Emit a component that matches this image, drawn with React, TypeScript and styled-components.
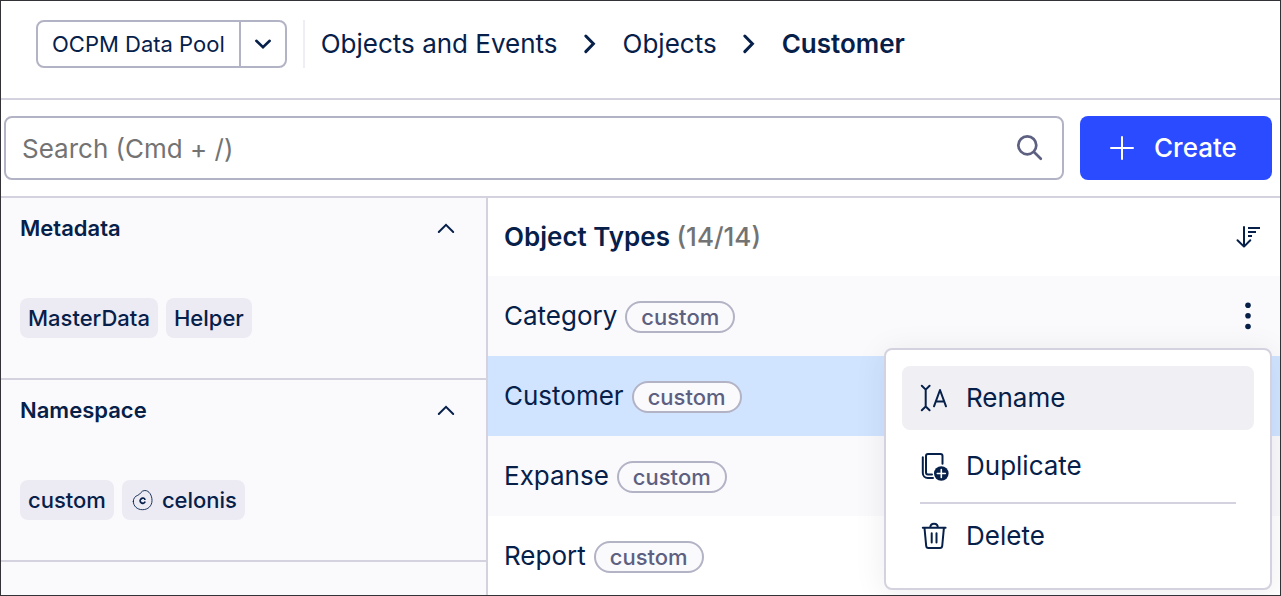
import React from "react";
import styled, { createGlobalStyle, css } from "styled-components";

const color = {
  ink: "#06204a",
  muted: "#5d6080",
  hint: "#737373",
  control: "#b3b3c6",
  line: "#d3d2de",
  faint: "#eeeef4",
  surface: "#fafafc",
  tag: "#ecebf3",
  hover: "#f0eff4",
  selected: "#d0e4ff",
  primary: "#2a4bff",
};

const GlobalStyle = createGlobalStyle`
  *, *::before, *::after { box-sizing: border-box; }
  body {
    margin: 0;
    color: ${color.ink};
    background: #fff;
    font-family: Inter, "Liberation Sans", sans-serif;
    font-size: 26px;
    line-height: 32px;
  }
  button, input {
    margin: 0;
    padding: 0;
    border: 0;
    background: none;
    color: inherit;
    font: inherit;
  }
  button { cursor: pointer; }
  h1, h2, ul, ol { margin: 0; padding: 0; font: inherit; list-style: none; }
`;

const Page = styled.div`
  display: flex;
  flex-direction: column;
  height: 100vh;
  overflow: hidden;
  border: 1px solid #333236;
`;

const Header = styled.header`
  display: flex;
  align-items: center;
  flex-shrink: 0;
  gap: 16px;
  padding: 19px 16px 30px 35px;
  border-bottom: 2px solid ${color.line};
`;

const SplitButton = styled.div`
  display: flex;
  height: 48px;
  border: 2px solid ${color.control};
  border-radius: 8px;
  font-size: 22px;
`;

const PoolButton = styled.button`
  padding: 0 14px;
  white-space: nowrap;
`;

const CaretButton = styled.button`
  display: flex;
  align-items: center;
  justify-content: center;
  width: 46px;
  border-left: 2px solid ${color.control};
`;

const HeaderDivider = styled.div`
  width: 2px;
  height: 48px;
  background: ${color.faint};
`;

const Crumbs = styled.ol`
  display: flex;
  align-items: center;
  gap: 17px;
  white-space: nowrap;
`;

const Crumb = styled.li`
  display: flex;
  align-items: center;
  gap: 16px;
`;

const CrumbLink = styled.a<{ $current?: boolean }>`
  color: inherit;
  text-decoration: none;
  font-weight: ${(p) => (p.$current ? 600 : 400)};
`;

const Icon = styled.svg<{ $size?: number; $stroke?: number }>`
  display: block;
  flex-shrink: 0;
  width: ${(p) => p.$size ?? 32}px;
  height: ${(p) => p.$size ?? 32}px;
  fill: none;
  stroke: currentColor;
  stroke-width: ${(p) => p.$stroke ?? 2};
  stroke-linecap: round;
  stroke-linejoin: round;
`;

const Toolbar = styled.div`
  display: flex;
  flex-shrink: 0;
  gap: 16px;
  padding: 16px 8px 16px 3px;
  border-bottom: 2px solid ${color.line};
`;

const SearchBox = styled.label`
  display: flex;
  align-items: center;
  flex: 1;
  height: 64px;
  padding: 0 16px;
  border: 2px solid ${color.control};
  border-radius: 8px;
  color: ${color.muted};
`;

const SearchInput = styled.input`
  flex: 1;
  min-width: 0;
  padding-top: 2px;
  outline: none;
  color: ${color.ink};
  &::placeholder { color: ${color.hint}; opacity: 1; }
`;

const CreateButton = styled.button`
  display: flex;
  align-items: center;
  gap: 16px;
  width: 192px;
  padding: 0 26px;
  border-radius: 8px;
  background: ${color.primary};
  color: #fff;
  font-weight: 500;
`;

const Body = styled.div`
  display: flex;
  flex: 1;
  min-height: 0;
`;

const Sidebar = styled.aside`
  width: 487px;
  flex-shrink: 0;
  border-right: 2px solid ${color.line};
  background: ${color.surface};
  font-size: 22px;
`;

const FilterSection = styled.section`
  border-bottom: 2px solid ${color.line};
`;

const FilterHeader = styled.button`
  display: flex;
  align-items: center;
  justify-content: space-between;
  width: 100%;
  height: 60px;
  padding: 0 28px 0 19px;
  font-weight: 600;
`;

const TagList = styled.div`
  display: flex;
  flex-wrap: wrap;
  gap: 8px;
  padding: 40px 19px;
`;

const Tag = styled.button`
  display: flex;
  align-items: center;
  gap: 8px;
  height: 40px;
  padding: 0 8px;
  border-radius: 8px;
  background: ${color.tag};
  font-weight: 500;
`;

const Main = styled.main`
  flex: 1;
  min-width: 0;
`;

const ListHeader = styled.div`
  display: flex;
  align-items: center;
  justify-content: space-between;
  height: 78px;
  padding: 0 16px;
`;

const ListTitle = styled.h2`
  font-weight: 600;
`;

const Count = styled.span`
  color: ${color.hint};
  font-weight: 500;
`;

const Row = styled.li<{ $selected?: boolean }>`
  position: relative;
  display: flex;
  align-items: center;
  gap: 8px;
  height: 80px;
  padding: 0 16px;
  &:nth-child(odd) { background: ${color.surface}; }
  ${(p) => p.$selected && css`background: ${color.selected};`}
`;

const Badge = styled.span`
  height: 32px;
  margin-top: 2px;
  padding: 0 14px;
  border: 2px solid ${color.control};
  border-radius: 16px;
  background: ${color.surface};
  color: ${color.muted};
  font-size: 22px;
  font-weight: 500;
  line-height: 28px;
`;

const MoreButton = styled.button`
  margin-left: auto;
`;

const Menu = styled.div`
  position: absolute;
  z-index: 1;
  top: 72px;
  right: 8px;
  width: 388px;
  padding: 16px;
  border: 2px solid ${color.line};
  border-radius: 8px;
  background: #fff;
  box-shadow: 0 4px 32px rgba(20, 20, 70, 0.08);
`;

const MenuItem = styled.button<{ $active?: boolean }>`
  display: flex;
  align-items: center;
  gap: 16px;
  width: 100%;
  height: 64px;
  margin-bottom: 4px;
  padding: 0 16px;
  border-radius: 8px;
  background: ${(p) => (p.$active ? color.hover : "transparent")};
`;

const MenuDivider = styled.div`
  height: 2px;
  margin: 0 18px;
  background: ${color.line};
`;

const CrumbArrow = () => (
  <Icon $stroke={3} viewBox="0 0 32 32" aria-hidden="true">
    <path d="M11.800 8l7.600 7.800-7.600 7.800" strokeLinejoin="miter" />
  </Icon>
);

const objectTypes = ["Category", "Customer", "Expanse", "Report"];

const RowMenu = () => (
  <Menu role="menu">
    <MenuItem role="menuitem" $active>
      <Icon viewBox="0 0 32 32" aria-hidden="true">
        <path d="M3.800 3.800L7.700 7.600 11.600 3.800M7.700 7.600v17M3.800 28.200l3.900-3.700 3.900 3.700" />
        <path d="M16 24.300L22 8l6 16.300M18 19.500h8" />
      </Icon>
      Rename
    </MenuItem>
    <MenuItem role="menuitem">
      <Icon viewBox="0 0 32 32" aria-hidden="true">
        <path d="M24.500 13.800V6a2 2 0 0 0-2-2H10a2 2 0 0 0-2 2v16.500a2 2 0 0 0 2 2h4" />
        <path d="M4.800 7.300V23a5 5 0 0 0 5 5H15" />
        <circle cx="23.300" cy="23.500" r="7.300" fill="currentColor" stroke="none" />
        <path d="M23.300 19.500v8M19.300 23.500h8" stroke="#fff" strokeWidth="1.600" />
      </Icon>
      Duplicate
    </MenuItem>
    <MenuDivider role="separator" />
    <MenuItem role="menuitem">
      <Icon viewBox="0 0 32 32" aria-hidden="true">
        <path d="M4.800 7.700h22.800M12.300 7.500c0-5 7.500-5 7.500 0M6.500 8l1.700 18a2.200 2.200 0 0 0 2.200 2H22a2.200 2.200 0 0 0 2.200-2L25.900 8M13.700 13.300v9.300M18.500 13.300v9.300" />
      </Icon>
      Delete
    </MenuItem>
  </Menu>
);

const Filter = ({ title, children }: { title: string; children: React.ReactNode }) => (
  <FilterSection>
    <FilterHeader aria-expanded="true">
      {title}
      <Icon $size={24} viewBox="0 0 24 24" aria-hidden="true">
        <path d="M4.800 16L12 8.800l7.200 7.200" strokeLinejoin="miter" />
      </Icon>
    </FilterHeader>
    <TagList>{children}</TagList>
  </FilterSection>
);

export default function App() {
  return (
    <>
      <GlobalStyle />
      <Page>
        <Header>
          <SplitButton>
            <PoolButton>OCPM Data Pool</PoolButton>
            <CaretButton aria-label="Choose data pool">
              <Icon $size={24} $stroke={2.6} viewBox="0 0 24 24" aria-hidden="true">
                <path d="M5.300 8.800L12 15.200l6.700-6.400" strokeLinejoin="miter" />
              </Icon>
            </CaretButton>
          </SplitButton>
          <HeaderDivider />
          <nav aria-label="Breadcrumb">
            <Crumbs>
              <Crumb>
                <CrumbLink href="#events">Objects and Events</CrumbLink>
                <CrumbArrow />
              </Crumb>
              <Crumb>
                <CrumbLink href="#objects">Objects</CrumbLink>
                <CrumbArrow />
              </Crumb>
              <Crumb>
                <CrumbLink href="#customer" aria-current="page" $current>
                  Customer
                </CrumbLink>
              </Crumb>
            </Crumbs>
          </nav>
        </Header>
        <Toolbar>
          <SearchBox>
            <SearchInput type="text" aria-label="Search" placeholder="Search (Cmd + /)" />
            <Icon $stroke={2.7} viewBox="0 0 32 32" aria-hidden="true">
              <circle cx="13.300" cy="13.300" r="9" />
              <path d="M20 20l6.800 6.800" />
            </Icon>
          </SearchBox>
          <CreateButton>
            <Icon viewBox="0 0 32 32" aria-hidden="true">
              <path d="M16 5v22M5 16h22" />
            </Icon>
            Create
          </CreateButton>
        </Toolbar>
        <Body>
          <Sidebar>
            <Filter title="Metadata">
              <Tag>MasterData</Tag>
              <Tag>Helper</Tag>
            </Filter>
            <Filter title="Namespace">
              <Tag>custom</Tag>
              <Tag>
                <Icon $size={24} $stroke={0.9} viewBox="0 0 24 24" aria-hidden="true">
                  <path d="M3.300 13.500c0-3.500 2-5.300 4.500-6.200 3.200-1.200 3.200-4.800 7-4.800 4.500 0 7.200 5 7.200 10 0 5.500-4 9.200-9.500 9.200S3.300 18 3.300 13.500z" />
                  <path d="M15 11.300a2.700 2.700 0 1 0 0 2.900" strokeWidth="1.500" />
                  <path d="M14.800 11.500a2.300 2.300 0 1 0 0 2.500" />
                </Icon>
                celonis
              </Tag>
            </Filter>
          </Sidebar>
          <Main>
            <ListHeader>
              <ListTitle>
                Object Types <Count>(14/14)</Count>
              </ListTitle>
              <button aria-label="Sort">
                <Icon viewBox="0 0 32 32" aria-hidden="true">
                  <path d="M12 6v19.500M5.500 19.300l6.500 6.300 6.300-6.300" />
                  <path d="M16 7h12M16 11h8M16 15h4" strokeLinecap="butt" />
                </Icon>
              </button>
            </ListHeader>
            <ul>
              {objectTypes.map((name, i) => (
                <Row key={name} $selected={name === "Customer"}>
                  <span>{name}</span>
                  <Badge>custom</Badge>
                  {i === 0 && (
                    <>
                      <MoreButton aria-label="More actions" aria-expanded="true">
                        <Icon viewBox="0 0 32 32" aria-hidden="true">
                          <g fill="currentColor" stroke="none">
                            <circle cx="16" cy="5.200" r="2.800" />
                            <circle cx="16" cy="15.800" r="2.800" />
                            <circle cx="16" cy="26.500" r="2.800" />
                          </g>
                        </Icon>
                      </MoreButton>
                      <RowMenu />
                    </>
                  )}
                </Row>
              ))}
            </ul>
          </Main>
        </Body>
      </Page>
    </>
  );
}
